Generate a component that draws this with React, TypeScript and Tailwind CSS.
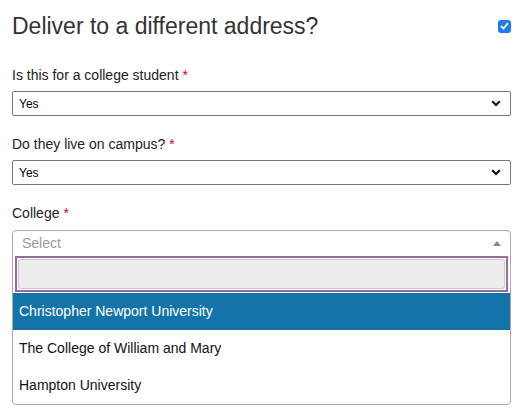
import React from "react";

const font = { fontFamily: '"Liberation Sans", Arial, Helvetica, sans-serif' };

function Label({ children }: { children: React.ReactNode }) {
  return (
    <div className="text-[14px] leading-[20px] text-[#222]">
      {children} <span className="text-[#e60000]">*</span>
    </div>
  );
}

function NativeSelect({ value }: { value: string }) {
  return (
    <div className="mt-[6px] h-[25px] w-full border border-[#767676] rounded-[2px] bg-white flex items-center justify-between pl-[6px] pr-[9px]">
      <span className="text-[12px] text-black">{value}</span>
      <svg width="10" height="7" viewBox="0 0 10 7">
        <path d="M1.2 1.2 L5 5 L8.8 1.2" fill="none" stroke="#111" strokeWidth="2.2" />
      </svg>
    </div>
  );
}

const colleges = [
  "Christopher Newport University",
  "The College of William and Mary",
  "Hampton University",
];

export default function App() {
  return (
    <div className="min-h-screen bg-white" style={font}>
      <div className="w-[499px] ml-[12px] pt-[12px]">
        {/* Heading */}
        <div className="flex items-center justify-between h-[28px]">
          <h2 className="text-[23px] leading-[28px] text-[#333]">Deliver to a different address?</h2>
          <div className="w-[13px] h-[13px] rounded-[3px] bg-[#1f7cf0] flex items-center justify-center">
            <svg width="9" height="8" viewBox="0 0 9 8">
              <path d="M1 4 L3.5 6.5 L8 1.2" fill="none" stroke="#fff" strokeWidth="1.8" />
            </svg>
          </div>
        </div>

        {/* Field 1 */}
        <div className="mt-[25px]">
          <Label>Is this for a college student</Label>
          <NativeSelect value="Yes" />
        </div>

        {/* Field 2 */}
        <div className="mt-[18px]">
          <Label>Do they live on campus?</Label>
          <NativeSelect value="Yes" />
        </div>

        {/* College select2 */}
        <div className="mt-[18px]">
          <Label>College</Label>
          <div className="mt-[7px] border border-[#aaa] rounded-[4px] bg-white overflow-hidden">
            <div className="h-[25px] flex items-center justify-between pl-[9px] pr-[9px]">
              <span className="text-[14px] text-[#999]">Select</span>
              <svg width="8" height="5" viewBox="0 0 8 5">
                <path d="M0 5 L4 0 L8 5 Z" fill="#888" />
              </svg>
            </div>
            <div className="px-[2px]">
              <div className="h-[36px] border-2 border-[#9a6a9b] p-[1px]">
                <div className="h-full border border-[#c8c8c8] rounded-[3px] bg-[#ededed]" />
              </div>
            </div>
            <div className="mt-[1px]">
              {colleges.map((c, i) => (
                <div
                  key={c}
                  className={
                    i === 0
                      ? "h-[37px] flex items-center px-[6px] text-[14px] bg-[#1474a9] text-white"
                      : "h-[37px] flex items-center px-[6px] text-[14px] text-[#111]"
                  }
                >
                  {c}
                </div>
              ))}
            </div>
          </div>
        </div>
      </div>
    </div>
  );
}
